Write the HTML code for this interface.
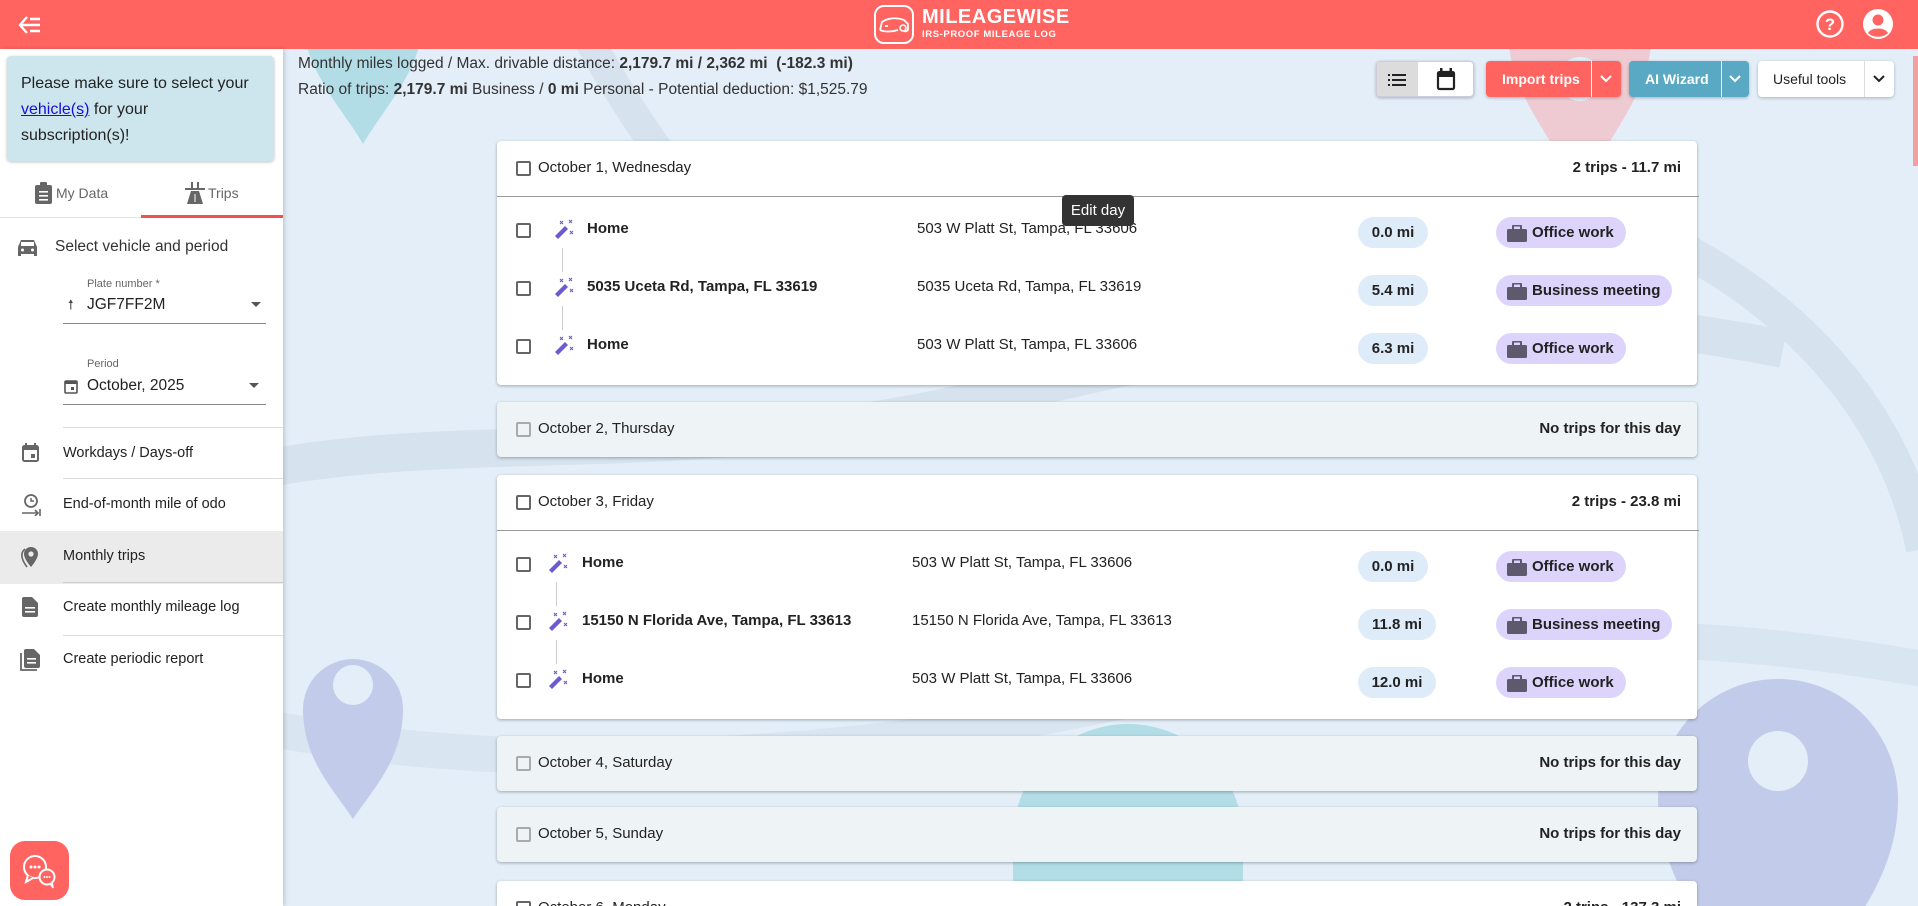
<!DOCTYPE html>
<html style="overflow:hidden;height:906px"><head><meta charset="utf-8"><style>
*{box-sizing:border-box;margin:0;padding:0}
body{width:1918px;height:906px;overflow:hidden;font-family:"Liberation Sans",Arial,sans-serif;color:#222;background:#e3eef8;position:relative}
.abs{position:absolute}
.hdr{left:0;top:0;width:1918px;height:49px;background:#ff6460}
.side{left:0;top:49px;width:283px;height:857px;background:#fff;box-shadow:2px 0 4px rgba(0,0,0,.15)}
.card{position:absolute;left:497px;width:1200px;background:#fff;border-radius:4px;box-shadow:0 1px 3px rgba(0,0,0,.3)}
.card.empty{background:#eef3f6}
.cb{position:absolute;width:15px;height:15px;border:2px solid #666;border-radius:2px}
.empty .cb{border-color:#aaa}
.t15{font-size:15px}
.pill{position:absolute;height:31px;border-radius:16px;font-size:15px;font-weight:bold;line-height:31px;color:#222}
.mi{background:#deebf8;text-align:center;width:70px}
.pur{background:#dcd4fb;padding:0 12px 0 36px}
.pur svg{position:absolute;left:11px;top:8px}
.menu{position:absolute;left:63px;font-size:14.5px;color:#222}
.div{position:absolute;left:63px;width:220px;height:1px;background:#ddd}
.btn{position:absolute;top:61px;height:36px;border-radius:4px;font-size:14px;font-weight:bold;line-height:36px;box-shadow:0 1px 3px rgba(0,0,0,.25)}
</style></head><body>

<svg class="abs" style="left:283px;top:49px" width="1635" height="857">
<path d="M-20 420 C200 380 400 420 700 350 S1200 240 1500 300" stroke="#d6e3ef" stroke-width="38" fill="none"/>
<path d="M300 -20 C420 200 560 330 800 300" stroke="#d6e3ef" stroke-width="30" fill="none"/>
<path d="M1100 120 C1400 140 1600 300 1640 500" stroke="#d6e3ef" stroke-width="34" fill="none"/>
<path d="M-10 680 C200 720 500 720 800 660 S1300 560 1640 620" stroke="#d9e5f0" stroke-width="36" fill="none"/>
<path d="M20 -30 a60 60 0 0 1 120 0 c0 50 -40 90 -60 125 c-20 -35 -60 -75 -60 -125z" fill="#b2dde7"/>
<path d="M1225 -20 a72 72 0 0 1 144 0 c0 70 -50 110 -72 170 c-22 -60 -72 -100 -72 -170z" fill="#eecbd2"/>
<circle cx="1297" cy="30" r="22" fill="#e3eef8"/>
<path d="M20 660 a50 50 0 0 1 100 0 c0 50 -30 80 -50 110 c-20 -30 -50 -60 -50 -110z" fill="#c3cbeb"/>
<circle cx="70" cy="636" r="20" fill="#e3eef8"/>
<path d="M1375 750 a120 120 0 0 1 240 0 c0 100 -80 160 -120 230 c-40 -70 -120 -130 -120 -230z" fill="#c3cbeb"/>
<circle cx="1495" cy="712" r="30" fill="#e3eef8"/>
<path d="M730 790 a115 115 0 0 1 230 0 v80 h-230z" fill="#b2dde7"/>
<path d="M340 330 a150 150 0 0 1 300 0z" fill="#eecbd2"/>
</svg>
<div class="abs" style="right:0;top:56px;width:5px;height:110px;background:#f4a0a3"></div>

<div class="abs hdr">
  <svg class="abs" style="left:18px;top:14px" width="24" height="22" viewBox="0 0 24 22"><path d="M9 3 L2 11 L9 19 M2 11 H22 M12 5 H22 M12 17 H22" stroke="#fff" stroke-width="2.4" fill="none"/></svg>
  <svg class="abs" style="left:873px;top:4px" width="42" height="41" viewBox="0 0 42 41"><rect x="2" y="2" width="38" height="37" rx="9" stroke="#fff" stroke-width="2" fill="none"/><path d="M7 26 l2-8 c6-4 14-5 22-2 l4 4 v5 c0 2-2 3-4 2 M7 26 c4 2 12 2 18 0 M12 22 l3 0" stroke="#fff" stroke-width="1.8" fill="none"/><circle cx="30" cy="24" r="3" stroke="#fff" stroke-width="1.6" fill="none"/></svg>
  <div class="abs" style="left:922px;top:6px;color:#fff;font-weight:bold;font-size:20px;letter-spacing:0.5px">MILEAGEWISE</div>
  <div class="abs" style="left:922px;top:29px;color:#fff;font-weight:bold;font-size:9.5px;letter-spacing:0.6px">IRS-PROOF MILEAGE LOG</div>
  <svg class="abs" style="left:1815px;top:9px" width="30" height="30" viewBox="0 0 30 30"><circle cx="15" cy="15" r="12.5" stroke="#fff" stroke-width="2.4" fill="none"/><text x="15" y="21" text-anchor="middle" fill="#fff" font-size="17" font-weight="bold" font-family="Liberation Sans">?</text></svg>
  <svg class="abs" style="left:1862px;top:8px" width="32" height="32" viewBox="0 0 32 32"><circle cx="16" cy="16" r="15" fill="#fff"/><circle cx="16" cy="12" r="5.5" fill="#ff6460"/><path d="M6 25 c3-6 17-6 20 0 c-5 5-15 5-20 0z" fill="#ff6460"/></svg>
</div>

<div class="abs side">
  <div class="abs" style="left:7px;top:7px;width:267px;height:105px;background:#cde6ee;border-radius:4px;box-shadow:0 1px 3px rgba(0,0,0,.25);padding:15px 10px 15px 14px;font-size:16px;line-height:26px;color:#222;white-space:nowrap">Please make sure to select your<br><span style="color:#1a0dd8;text-decoration:underline">vehicle(s)</span> for your<br>subscription(s)!</div>
  <svg class="abs" style="left:34px;top:133px" width="20" height="22" viewBox="0 0 20 22"><rect x="1" y="3" width="17" height="19" rx="2" fill="#666"/><rect x="6" y="0" width="7" height="5" rx="1" fill="#666"/><rect x="5" y="9" width="9" height="1.6" fill="#fff"/><rect x="5" y="13" width="9" height="1.6" fill="#fff"/><rect x="5" y="17" width="9" height="1.6" fill="#fff"/></svg>
  <div class="abs" style="left:56px;top:136px;font-size:14px;color:#666">My Data</div>
  <svg class="abs" style="left:184px;top:133px" width="22" height="22" viewBox="0 0 22 22"><rect x="1" y="6" width="20" height="2" fill="#666"/><path d="M7 9 h8 l4 13 h-16z" fill="#666"/><rect x="7" y="0" width="2" height="6" fill="#666"/><rect x="13" y="0" width="2" height="6" fill="#666"/><rect x="10.5" y="12" width="1" height="8" fill="#fff"/></svg>
  <div class="abs" style="left:208px;top:136px;font-size:14px;color:#666">Trips</div>
  <div class="abs" style="left:0;top:168px;width:283px;height:1px;background:#e4e4e4"></div>
  <div class="abs" style="left:141px;top:166px;width:142px;height:3px;background:#f0514c"></div>

  <svg class="abs" style="left:18px;top:190px" width="19" height="17" viewBox="0 0 19 17"><path d="M3 1 h13 l3 7 v9 h-3 v-2 h-13 v2 h-3 v-9z" fill="#666"/><rect x="3" y="3" width="13" height="4" fill="#fff"/><circle cx="4.5" cy="11" r="1.5" fill="#fff"/><circle cx="14.5" cy="11" r="1.5" fill="#fff"/></svg>
  <div class="abs" style="left:55px;top:189px;font-size:15.5px;color:#333">Select vehicle and period</div>
  <div class="abs" style="left:87px;top:229px;font-size:11px;color:#666">Plate number *</div>
  <div class="abs" style="left:68px;top:247px;font-size:13px;color:#444">&#129045;</div>
  <div class="abs" style="left:87px;top:247px;font-size:15.5px;color:#222">JGF7FF2M</div>
  <div class="abs" style="left:251px;top:253px;width:0;height:0;border-left:5px solid transparent;border-right:5px solid transparent;border-top:5px solid #555"></div>
  <div class="abs" style="left:63px;top:274px;width:203px;height:1px;background:#888"></div>
  <div class="abs" style="left:87px;top:309px;font-size:11px;color:#666">Period</div>
  <svg class="abs" style="left:64px;top:330px" width="14" height="15" viewBox="0 0 14 15"><rect x="1" y="2" width="12" height="12" rx="1" stroke="#555" stroke-width="1.6" fill="none"/><rect x="1" y="2" width="12" height="3" fill="#555"/><rect x="7" y="8" width="3" height="3" fill="#555"/></svg>
  <div class="abs" style="left:87px;top:328px;font-size:15.5px;color:#222">October, 2025</div>
  <div class="abs" style="left:249px;top:334px;width:0;height:0;border-left:5px solid transparent;border-right:5px solid transparent;border-top:5px solid #555"></div>
  <div class="abs" style="left:63px;top:355px;width:203px;height:1px;background:#888"></div>

  <div class="div" style="top:378px"></div>
  <svg class="abs" style="left:22px;top:394px" width="17" height="19" viewBox="0 0 17 19"><rect x="1" y="3" width="15" height="15" rx="1.5" stroke="#666" stroke-width="2" fill="none"/><rect x="1" y="3" width="15" height="4" fill="#666"/><rect x="3" y="0" width="2" height="4" fill="#666"/><rect x="12" y="0" width="2" height="4" fill="#666"/><rect x="9" y="11" width="4" height="4" fill="#666"/></svg>
  <div class="menu" style="top:396px">Workdays / Days-off</div>
  <div class="div" style="top:429px"></div>
  <svg class="abs" style="left:21px;top:445px" width="20" height="22" viewBox="0 0 20 22"><circle cx="10" cy="7" r="6" stroke="#666" stroke-width="1.8" fill="none"/><path d="M10 4 v3 h3" stroke="#666" stroke-width="1.5" fill="none"/><path d="M1 19 h16 M14 16 l3 3 l-3 3 M19 15 v8" stroke="#666" stroke-width="1.6" fill="none"/></svg>
  <div class="menu" style="top:447px">End-of-month mile of odo</div>
  <div class="abs" style="left:0;top:482px;width:283px;height:53px;background:#ebebeb"></div>
  <div class="div" style="top:533px;background:#ccc"></div>
  <svg class="abs" style="left:20px;top:497px" width="20" height="23" viewBox="0 0 20 23"><path d="M11 1 a7 7 0 0 1 7 7 c0 5-7 13-7 13 s-7-8-7-13 a7 7 0 0 1 7-7z" fill="#666"/><circle cx="11" cy="8" r="2.6" fill="#ebebeb"/><path d="M5 3 c-5 4-4 10 2 18" stroke="#666" stroke-width="1.6" fill="none"/></svg>
  <div class="menu" style="top:499px">Monthly trips</div>
  <svg class="abs" style="left:22px;top:548px" width="16" height="20" viewBox="0 0 16 20"><path d="M0 2 a2 2 0 0 1 2-2 h8 l6 6 v12 a2 2 0 0 1-2 2 h-12 a2 2 0 0 1-2-2z" fill="#666"/><rect x="3" y="10" width="10" height="1.6" fill="#fff"/><rect x="3" y="14" width="10" height="1.6" fill="#fff"/></svg>
  <div class="menu" style="top:550px">Create monthly mileage log</div>
  <div class="div" style="top:586px"></div>
  <svg class="abs" style="left:20px;top:600px" width="21" height="22" viewBox="0 0 21 22"><path d="M1 4 v17 h16" stroke="#666" stroke-width="1.8" fill="none"/><path d="M4 2 a2 2 0 0 1 2-2 h8 l6 6 v11 a2 2 0 0 1-2 2 h-12 a2 2 0 0 1-2-2z" fill="#666"/><rect x="7" y="9" width="9" height="1.6" fill="#fff"/><rect x="7" y="13" width="9" height="1.6" fill="#fff"/></svg>
  <div class="menu" style="top:602px">Create periodic report</div>

  <div class="abs" style="left:10px;top:792px;width:59px;height:59px;border-radius:15px;background:#ff6460"></div>
  <svg class="abs" style="left:20px;top:803px" width="40" height="38" viewBox="0 0 40 38"><circle cx="15" cy="15" r="11" stroke="#fff" stroke-width="2" fill="#ff6460"/><path d="M8 23 l-2 7 l7-4" fill="#ff6460" stroke="#fff" stroke-width="2"/><circle cx="11" cy="15" r="1.5" fill="#fff"/><circle cx="15" cy="15" r="1.5" fill="#fff"/><circle cx="19" cy="15" r="1.5" fill="#fff"/><circle cx="27" cy="25" r="7.5" stroke="#fff" stroke-width="2" fill="#ff6460"/><path d="M30 31 l3 5 l-1-6" fill="#ff6460" stroke="#fff" stroke-width="1.6"/><circle cx="24.5" cy="25" r="1" fill="#fff"/><circle cx="27" cy="25" r="1" fill="#fff"/><circle cx="29.5" cy="25" r="1" fill="#fff"/></svg>
</div>

<div class="abs" style="left:298px;top:55px;font-size:15.5px;color:#333">Monthly miles logged / Max. drivable distance: <b>2,179.7 mi / 2,362 mi</b> &nbsp;<b>(-182.3 mi)</b></div>
<div class="abs" style="left:298px;top:81px;font-size:15.5px;color:#333">Ratio of trips: <b>2,179.7 mi</b> Business / <b>0 mi</b> Personal - Potential deduction: $1,525.79</div>

<div class="btn" style="left:1376px;width:98px;background:#fff;border:1px solid #ccd;overflow:hidden">
  <div class="abs" style="left:0;top:0;width:41px;height:36px;background:#dcdcdc"></div>
  <svg class="abs" style="left:11px;top:11px" width="18" height="14" viewBox="0 0 18 14"><g fill="#222"><rect x="0" y="1" width="2" height="2"/><rect x="4" y="1" width="14" height="2"/><rect x="0" y="6" width="2" height="2"/><rect x="4" y="6" width="14" height="2"/><rect x="0" y="11" width="2" height="2"/><rect x="4" y="11" width="14" height="2"/></g></svg>
  <svg class="abs" style="left:59px;top:6px" width="20" height="23" viewBox="0 0 20 23"><rect x="2" y="4" width="16" height="17" rx="1.5" stroke="#222" stroke-width="2.2" fill="none"/><rect x="2" y="4" width="16" height="5" fill="#222"/><rect x="4" y="0" width="2.5" height="5" fill="#222"/><rect x="13.5" y="0" width="2.5" height="5" fill="#222"/></svg>
</div>
<div class="btn" style="left:1486px;width:135px;background:#ff6460;color:#fff">
  <span style="position:absolute;left:16px">Import trips</span>
  <div class="abs" style="left:105px;top:0;width:1px;height:36px;background:#fff"></div>
  <svg class="abs" style="left:114px;top:14px" width="12" height="8" viewBox="0 0 12 8"><path d="M1 1 l5 5 l5-5" stroke="#fff" stroke-width="2" fill="none"/></svg>
</div>
<div class="btn" style="left:1629px;width:120px;background:#59a9c4;color:#fff">
  <span style="position:absolute;left:16px">AI Wizard</span>
  <div class="abs" style="left:92px;top:0;width:1px;height:36px;background:#fff"></div>
  <svg class="abs" style="left:100px;top:14px" width="12" height="8" viewBox="0 0 12 8"><path d="M1 1 l5 5 l5-5" stroke="#fff" stroke-width="2" fill="none"/></svg>
</div>
<div class="btn" style="left:1758px;width:136px;background:#fff;color:#222;font-weight:normal">
  <span style="position:absolute;left:15px">Useful tools</span>
  <div class="abs" style="left:106px;top:0;width:1px;height:36px;background:#ddd"></div>
  <svg class="abs" style="left:115px;top:14px" width="12" height="8" viewBox="0 0 12 8"><path d="M1 1 l5 5 l5-5" stroke="#222" stroke-width="2" fill="none"/></svg>
</div>

<svg width="0" height="0" style="position:absolute"><defs>
<symbol id="wand" viewBox="0 0 22 22"><path d="M2 19 l10-10 l3 3 l-10 10z" fill="#6a5bd0" transform="translate(0,-2)"/><path d="M7 2 l3 3 M10 2 l-3 3 M16 1 l3 3 M19 1 l-3 3 M17 12 l3 3 M20 12 l-3 3" stroke="#6a5bd0" stroke-width="1.1"/></symbol>
<symbol id="bag" viewBox="0 0 20 17"><rect x="0" y="4" width="20" height="13" rx="1.5" fill="#5e5a6e"/><path d="M6 4 v-2.5 a1 1 0 0 1 1-1 h6 a1 1 0 0 1 1 1 v2.5" stroke="#5e5a6e" stroke-width="2" fill="none"/></symbol>
</defs></svg>

<div class="card" style="top:141px;height:244px">
  <div class="cb" style="left:19px;top:20px"></div>
  <div class="abs t15" style="left:41px;top:18px;color:#222">October 1, Wednesday</div>
  <div class="abs t15" style="right:16px;top:18px;font-weight:bold">2 trips - 11.7 mi</div>
  <div class="abs" style="left:0;top:55px;width:1202px;height:1px;background:#999"></div>
  <div class="cb" style="left:19px;top:82px"></div><svg class="abs" style="left:56px;top:78px" width="22" height="22"><use href="#wand"/></svg>
  <div class="abs t15" style="left:90px;top:79px;font-weight:bold">Home</div>
  <div class="abs t15" style="left:420px;top:79px">503 W Platt St, Tampa, FL 33606</div>
  <div class="abs" style="left:65px;top:107px;width:1px;height:24px;background:#ccc"></div>
  <div class="cb" style="left:19px;top:140px"></div><svg class="abs" style="left:56px;top:136px" width="22" height="22"><use href="#wand"/></svg>
  <div class="abs t15" style="left:90px;top:137px;font-weight:bold">5035 Uceta Rd, Tampa, FL 33619</div>
  <div class="abs t15" style="left:420px;top:137px">5035 Uceta Rd, Tampa, FL 33619</div>
  <div class="abs" style="left:65px;top:165px;width:1px;height:24px;background:#ccc"></div>
  <div class="cb" style="left:19px;top:198px"></div><svg class="abs" style="left:56px;top:194px" width="22" height="22"><use href="#wand"/></svg>
  <div class="abs t15" style="left:90px;top:195px;font-weight:bold">Home</div>
  <div class="abs t15" style="left:420px;top:195px">503 W Platt St, Tampa, FL 33606</div>
  <div class="pill mi" style="left:861px;top:76px">0.0 mi</div>
  <div class="pill pur" style="left:999px;top:76px"><svg width="20" height="17"><use href="#bag"/></svg>Office work</div>
  <div class="pill mi" style="left:861px;top:134px">5.4 mi</div>
  <div class="pill pur" style="left:999px;top:134px"><svg width="20" height="17"><use href="#bag"/></svg>Business meeting</div>
  <div class="pill mi" style="left:861px;top:192px">6.3 mi</div>
  <div class="pill pur" style="left:999px;top:192px"><svg width="20" height="17"><use href="#bag"/></svg>Office work</div>
</div>

<div class="abs" style="left:1062px;top:195px;width:72px;height:31px;background:#333;border-radius:4px;color:#fff;font-size:15px;line-height:31px;text-align:center">Edit day</div>

<div class="card empty" style="top:402px;height:55px">
  <div class="cb" style="left:19px;top:20px"></div>
  <div class="abs t15" style="left:41px;top:18px">October 2, Thursday</div>
  <div class="abs t15" style="right:16px;top:18px;font-weight:bold">No trips for this day</div>
</div>

<div class="card" style="top:475px;height:244px">
  <div class="cb" style="left:19px;top:20px"></div>
  <div class="abs t15" style="left:41px;top:18px">October 3, Friday</div>
  <div class="abs t15" style="right:16px;top:18px;font-weight:bold">2 trips - 23.8 mi</div>
  <div class="abs" style="left:0;top:55px;width:1202px;height:1px;background:#999"></div>
  <div class="cb" style="left:19px;top:82px"></div><svg class="abs" style="left:50px;top:78px" width="22" height="22"><use href="#wand"/></svg>
  <div class="abs t15" style="left:85px;top:79px;font-weight:bold">Home</div>
  <div class="abs t15" style="left:415px;top:79px">503 W Platt St, Tampa, FL 33606</div>
  <div class="abs" style="left:59px;top:107px;width:1px;height:24px;background:#ccc"></div>
  <div class="cb" style="left:19px;top:140px"></div><svg class="abs" style="left:50px;top:136px" width="22" height="22"><use href="#wand"/></svg>
  <div class="abs t15" style="left:85px;top:137px;font-weight:bold">15150 N Florida Ave, Tampa, FL 33613</div>
  <div class="abs t15" style="left:415px;top:137px">15150 N Florida Ave, Tampa, FL 33613</div>
  <div class="abs" style="left:59px;top:165px;width:1px;height:24px;background:#ccc"></div>
  <div class="cb" style="left:19px;top:198px"></div><svg class="abs" style="left:50px;top:194px" width="22" height="22"><use href="#wand"/></svg>
  <div class="abs t15" style="left:85px;top:195px;font-weight:bold">Home</div>
  <div class="abs t15" style="left:415px;top:195px">503 W Platt St, Tampa, FL 33606</div>
  <div class="pill mi" style="left:861px;top:76px">0.0 mi</div>
  <div class="pill pur" style="left:999px;top:76px"><svg width="20" height="17"><use href="#bag"/></svg>Office work</div>
  <div class="pill mi" style="left:861px;top:134px;width:78px">11.8 mi</div>
  <div class="pill pur" style="left:999px;top:134px"><svg width="20" height="17"><use href="#bag"/></svg>Business meeting</div>
  <div class="pill mi" style="left:861px;top:192px;width:78px">12.0 mi</div>
  <div class="pill pur" style="left:999px;top:192px"><svg width="20" height="17"><use href="#bag"/></svg>Office work</div>
</div>

<div class="card empty" style="top:736px;height:55px">
  <div class="cb" style="left:19px;top:20px"></div>
  <div class="abs t15" style="left:41px;top:18px">October 4, Saturday</div>
  <div class="abs t15" style="right:16px;top:18px;font-weight:bold">No trips for this day</div>
</div>
<div class="card empty" style="top:807px;height:55px">
  <div class="cb" style="left:19px;top:20px"></div>
  <div class="abs t15" style="left:41px;top:18px">October 5, Sunday</div>
  <div class="abs t15" style="right:16px;top:18px;font-weight:bold">No trips for this day</div>
</div>
<div class="card" style="top:881px;height:25px;border-radius:4px 4px 0 0;overflow:hidden">
  <div class="cb" style="left:19px;top:20px"></div>
  <div class="abs t15" style="left:41px;top:18px">October 6, Monday</div>
  <div class="abs t15" style="right:16px;top:18px;font-weight:bold">2 trips - 137.3 mi</div>
</div>
</body></html>
